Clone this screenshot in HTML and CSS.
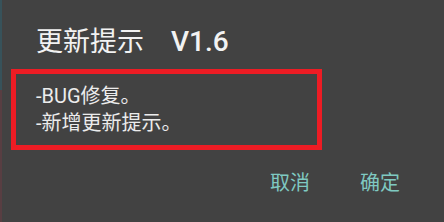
FILE: index.html
```html
<!DOCTYPE html>
<html lang="zh-CN">
<head>
    <meta charset="UTF-8">
    <meta name="viewport" content="width=device-width, initial-scale=1.0">
    <title>更新提示</title>
    <link rel="stylesheet" href="styles.css">
</head>
<body>

    <div class="dialog">
        <div class="title">更新提示<span class="version">V1.6</span></div>
        <div class="message">
            <div class="line">-BUG修复。</div>
            <div class="line">-新增更新提示。</div>
        </div>
        <div class="actions">
            <span class="btn">取消</span>
            <span class="btn">确定</span>
        </div>
    </div>

</body>
</html>
```

FILE: styles.css
```css
html, body {
    margin: 0;
    padding: 0;
}

body {
    width: 444px;
    height: 222px;
    overflow: hidden;
    font-family: "Roboto", "Noto Sans CJK SC", sans-serif;
    background:
        linear-gradient(#37525a, #37525a) 0 0 / 2px 90px no-repeat,
        linear-gradient(#583e42, #583e42) 0 90px / 2px 132px no-repeat,
        #424242;
}

.dialog {
    display: flex;
    flex-direction: column;
    height: 222px;
}

.title {
    margin: 24px 0 0 36px;
    font-size: 27px;
    line-height: 36px;
    color: #f2f2f2;
}

.version {
    margin-left: 27px;
    font-size: 28px;
    font-weight: 500;
}

.message {
    margin: 9px 0 0 11px;
    width: 281px;
    height: 71px;
    border: 5px solid #ed1c24;
    padding: 0 0 0 20px;
    display: flex;
    flex-direction: column;
    justify-content: center;
    color: #ececec;
    font-size: 20px;
    line-height: 27px;
}

.actions {
    display: flex;
    justify-content: flex-end;
    gap: 50px;
    margin-top: 20px;
    padding-right: 44px;
    font-size: 20px;
    line-height: 26px;
    color: #7fc9c1;
}
```
